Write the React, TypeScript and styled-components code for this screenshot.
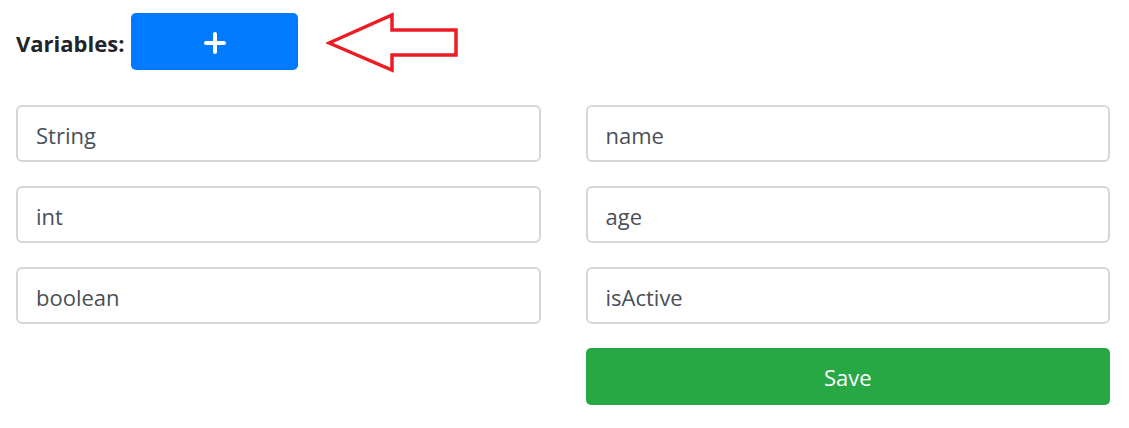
import { Fragment } from 'react';
import styled, { createGlobalStyle } from 'styled-components';

const GlobalStyle = createGlobalStyle`
  body {
    margin: 0;
    background: #ffffff;
    font-family: "Open Sans", "Noto Sans", sans-serif;
  }
`;

const Page = styled.div`
  width: 1094px;
  padding: 13px 0 0 16px;
`;

const Header = styled.div`
  display: flex;
  align-items: center;
  height: 57px;
`;

const Label = styled.span`
  font-size: 22px;
  font-weight: 700;
  color: #212529;
  margin-right: 7px;
  margin-top: 2px;
`;

const AddButton = styled.button`
  width: 167px;
  height: 57px;
  border: none;
  border-radius: 5px;
  background: #007bff;
  display: flex;
  align-items: center;
  justify-content: center;
  padding: 2px 0 0;
  cursor: pointer;
`;

const Arrow = styled.svg`
  margin-left: 28px;
  margin-top: 2px;
`;

const Grid = styled.div`
  display: grid;
  grid-template-columns: 1fr 1fr;
  column-gap: 45px;
  row-gap: 24px;
  margin-top: 35px;
`;

const Field = styled.input`
  box-sizing: border-box;
  height: 57px;
  width: 100%;
  border: 2px solid #d3d7dc;
  border-radius: 6px;
  padding: 3px 18px 0;
  font-family: "Open Sans", "Noto Sans", sans-serif;
  font-size: 22px;
  color: #495057;
  background: #fff;
  outline: none;
`;

const SaveButton = styled.button`
  grid-column: 2;
  height: 57px;
  border: none;
  border-radius: 5px;
  background: #28a745;
  color: #fff;
  font-family: "Open Sans", "Noto Sans", sans-serif;
  font-size: 22px;
  padding-top: 2px;
  cursor: pointer;
`;

const rows = [
  ['String', 'name'],
  ['int', 'age'],
  ['boolean', 'isActive'],
];

function App() {
  return (
    <Page>
      <GlobalStyle />
      <Header>
        <Label>Variables:</Label>
        <AddButton>
          <svg width="22" height="22" viewBox="0 0 22 22">
            <rect x="9" y="0" width="4" height="22" rx="2" fill="#fff" />
            <rect x="0" y="9" width="22" height="4" rx="2" fill="#fff" />
          </svg>
        </AddButton>
        <Arrow width="134" height="62" viewBox="0 0 134 62">
          <polygon
            points="3,31 66,3 66,18 130,18 130,43 66,43 66,58"
            fill="none"
            stroke="#ed1c24"
            strokeWidth="3.5"
            strokeLinejoin="miter"
          />
        </Arrow>
      </Header>
      <Grid>
        {rows.map(([type, name]) => (
          <Fragment key={type}>
            <Field defaultValue={type} />
            <Field defaultValue={name} />
          </Fragment>
        ))}
        <SaveButton>Save</SaveButton>
      </Grid>
    </Page>
  );
}

export default App;
